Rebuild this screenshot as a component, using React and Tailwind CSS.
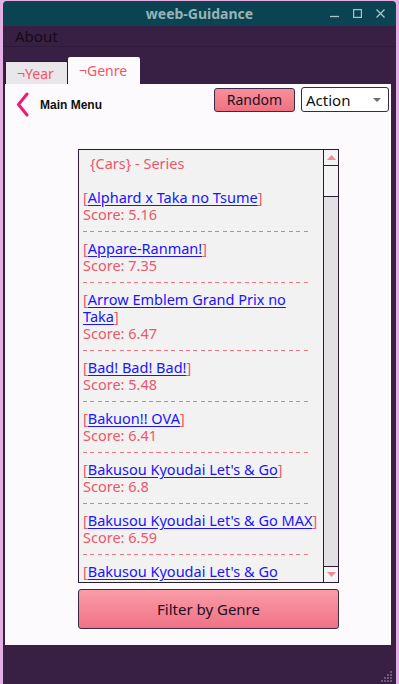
import React from 'react'

const items = [
  { title: 'Alphard x Taka no Tsume', score: '5.16' },
  { title: 'Appare-Ranman!', score: '7.35' },
  { title: 'Arrow Emblem Grand Prix no Taka', score: '6.47' },
  { title: 'Bad! Bad! Bad!', score: '5.48' },
  { title: 'Bakuon!! OVA', score: '6.41' },
  { title: "Bakusou Kyoudai Let's & Go", score: '6.8' },
  { title: "Bakusou Kyoudai Let's & Go MAX", score: '6.59' },
  { title: "Bakusou Kyoudai Let's & Go WGP", score: '6.97' },
]

function Dashes() {
  return (
    <div className="h-[17px] flex items-center">
      <div className="h-px w-[228px] bg-[repeating-linear-gradient(90deg,#f27382_0px,#f27382_4px,transparent_4px,transparent_7.35px)]" />
    </div>
  )
}

function Item({ title, score }) {
  return (
    <div>
      <div className="leading-[17px]">
        <span className="text-[#f0566a]">[</span>
        <a href="#" className="text-[#1a14ff] underline decoration-[#1a14ff] underline-offset-[2px]">{title}</a>
        <span className="text-[#f0566a]">]</span>
      </div>
      <div className="leading-[17px] text-[#f0566a]">Score: {score}</div>
      <Dashes />
    </div>
  )
}

function ScrollArrow({ down }) {
  return (
    <div className="h-[15px] flex items-center justify-center bg-[#f5f4f5]">
      <svg width="9" height="5" viewBox="0 0 9 5">
        {down ? <path d="M0 0h9L4.5 5z" fill="#f08a98" /> : <path d="M0 5h9L4.5 0z" fill="#f08a98" />}
      </svg>
    </div>
  )
}

export default function App() {
  return (
    <div className="w-[399px] h-[684px] bg-[#e4b0e4] pl-[3px] pr-[3px] pt-[1px] flex overflow-hidden" style={{ fontFamily: '"Noto Sans", "Liberation Sans", sans-serif' }}>
      <div className="flex-1 flex flex-col">
        {/* title bar */}
        <div className="h-[25px] bg-[#0b4352] rounded-t-[4px] grid grid-cols-[1fr_auto_1fr] items-center">
          <div />
          <div className="text-[14px] leading-[18px] font-bold text-[#96b3b7]">weeb-Guidance</div>
          <div className="flex justify-end items-center gap-[14px] pr-[11px]">
            <svg width="9" height="9" viewBox="0 0 9 9"><path d="M0 7.5h9" stroke="#a9c4c6" strokeWidth="1.3" /></svg>
            <svg width="9" height="9" viewBox="0 0 9 9"><rect x="0.6" y="0.6" width="7.8" height="7.8" fill="none" stroke="#a9c4c6" strokeWidth="1.2" /></svg>
            <svg width="9" height="9" viewBox="0 0 9 9"><path d="M0.5 0.5l8 8M8.5 0.5l-8 8" stroke="#a9c4c6" strokeWidth="1.3" /></svg>
          </div>
        </div>

        {/* menu bar */}
        <div className="h-[21px] bg-[#372044] border-b border-[#2e1a39] flex items-center pl-[12px]">
          <span className="text-[15px] leading-[18px] text-[#140a19]">About</span>
        </div>

        {/* body */}
        <div className="flex-1 bg-[#372044] flex flex-col border-r border-[#0d3a44]">
          <div className="flex items-end pl-[2px] pt-[10px]">
            <div className="h-[23px] w-[63px] bg-[#e9e7e9] border border-b-0 border-[#2a1a32] rounded-t-[2px] flex items-center pl-[11px] text-[14px] text-[#f0566a]">¬Year</div>
            <div className="h-[27px] w-[72px] bg-[#fcfafc] rounded-t-[2px] flex items-center pl-[11px] text-[14px] text-[#f0566a]">¬Genre</div>
          </div>

          <div className="ml-[2px] mr-[4px] h-[561px] bg-[#fcfafc] flex flex-col">
            <div className="flex items-start justify-between pr-[2px]">
              <div className="flex items-center pl-[11px] pt-[8px] gap-[11px]">
                <svg width="13" height="25" viewBox="0 0 13 25">
                  <path d="M11 2L2.5 12.5L11 23" fill="none" stroke="#ef1a78" strokeWidth="3" strokeLinecap="round" strokeLinejoin="round" />
                </svg>
                <span className="text-[12px] font-bold text-[#101010] font-['Liberation_Sans',sans-serif]">Main Menu</span>
              </div>
              <div className="flex items-center gap-[6px] pt-[3px]">
                <button className="h-[24px] w-[81px] rounded-[3px] border border-[#3b2a45] bg-gradient-to-b from-[#f78f9b] to-[#f0717f] text-[14px] leading-[18px] text-[#1c1024]">Random</button>
                <div className="h-[25px] w-[88px] rounded-[3px] border border-[#3b2a45] bg-white flex items-center justify-between pl-[4px] pr-[7px]">
                  <span className="text-[15px] leading-[18px] text-[#101010]">Action</span>
                  <svg width="8" height="4" viewBox="0 0 8 4"><path d="M0 0h8L4 4z" fill="#6e6e6e" /></svg>
                </div>
              </div>
            </div>

            <div className="ml-[73px] mt-[32px] w-[261px] h-[434px] border border-[#2a1a32] bg-[#f2f2f2] flex">
              <div className="flex-1 overflow-hidden pl-[4px] pt-[5px] pr-[5px] text-[14.5px]">
                <div className="leading-[17px] text-[#f0566a] pl-[7px]">{'{Cars} - Series'}</div>
                <div className="h-[17px]" />
                {items.map((it) => (
                  <Item key={it.title} {...it} />
                ))}
              </div>
              <div className="w-[15px] border-l border-[#2a1a32] flex flex-col">
                <ScrollArrow />
                <div className="h-[32px] bg-[#f5f4f5] border-t border-b border-[#2a1a32]" />
                <div className="flex-1 bg-[#e2e0e2]" />
                <div className="border-t border-[#2a1a32]" />
                <ScrollArrow down />
              </div>
            </div>

            <button className="ml-[73px] mt-[6px] w-[261px] h-[40px] rounded-[3px] border border-[#3b2a45] bg-gradient-to-b from-[#f99ca7] to-[#f07186] text-[15px] text-[#1c1024]">Filter by Genre</button>
          </div>

          <div className="flex-1 flex items-end justify-end pr-[2px] pb-[1px]">
            <svg width="12" height="12" viewBox="0 0 12 12" fill="#6d5a78">
              <rect x="9" y="0" width="2" height="2" />
              <rect x="6" y="3" width="2" height="2" />
              <rect x="9" y="3" width="2" height="2" />
              <rect x="3" y="6" width="2" height="2" />
              <rect x="6" y="6" width="2" height="2" />
              <rect x="9" y="6" width="2" height="2" />
              <rect x="0" y="9" width="2" height="2" />
              <rect x="3" y="9" width="2" height="2" />
              <rect x="6" y="9" width="2" height="2" />
              <rect x="9" y="9" width="2" height="2" />
            </svg>
          </div>
        </div>
      </div>
    </div>
  )
}
